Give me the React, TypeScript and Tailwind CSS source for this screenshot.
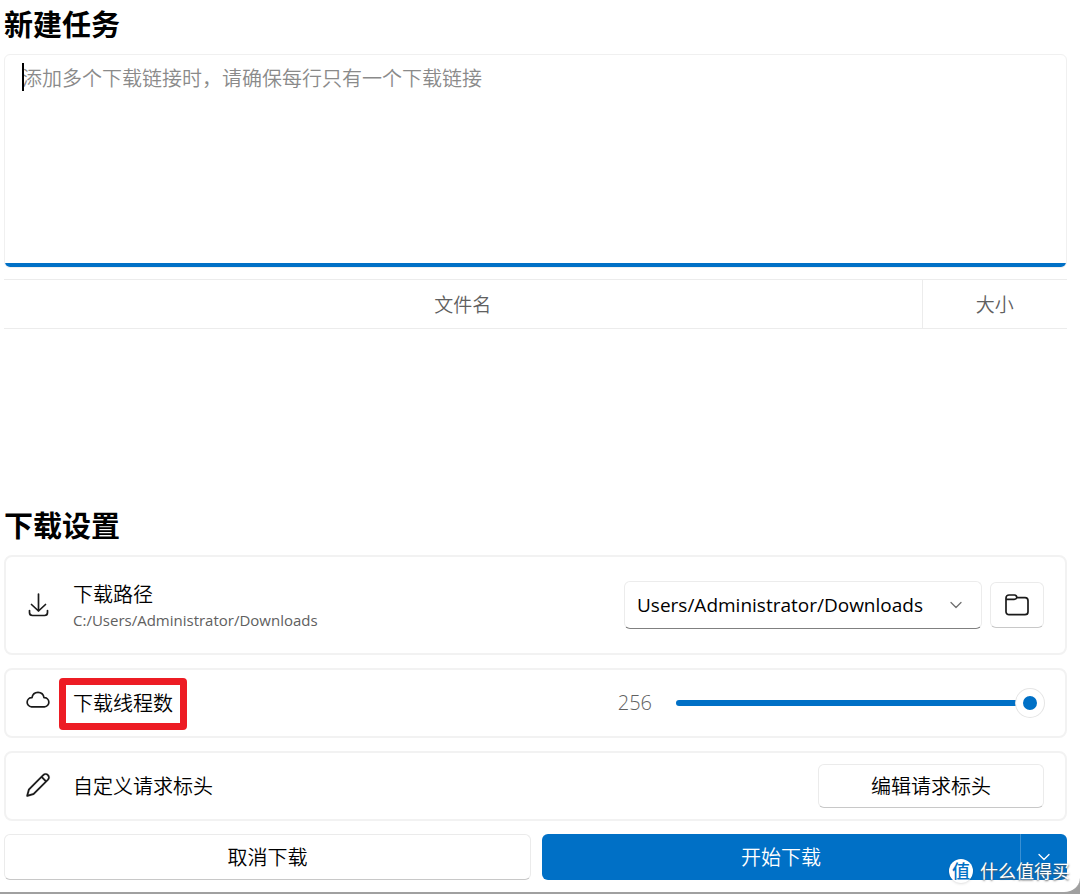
import { useState, type ReactNode } from 'react';

const DOWNLOAD_PATH = 'C:/Users/Administrator/Downloads';
const MAX_THREADS = 256;

const buttonBase =
  'flex items-center justify-center rounded-md border border-[#ebebeb] border-b-[#c8c8c8] bg-white text-xl hover:bg-gray-50';

function DownloadIcon() {
  return (
    <svg viewBox="0 0 24 24" className="size-6" fill="none" stroke="#1a1a1a" strokeWidth="1.7" strokeLinecap="round" strokeLinejoin="round">
      <path d="M12.5 1v17M5.500 11.500l7 6.500 7-6.500M3.500 17.500v2a3 3 0 0 0 3 3h12a3 3 0 0 0 3-3v-2" />
    </svg>
  );
}

function CloudIcon() {
  return (
    <svg viewBox="0 0 24 24" className="mb-1.5 size-6" fill="none" stroke="#1a1a1a" strokeWidth="1.7" strokeLinejoin="round">
      <path d="M5.5 18.8a4.6 4.6 0 0 1 .5-9.2c.5-3.2 2.9-5.3 6-5.3s5.5 2.1 6 5.3a4.6 4.6 0 0 1 .5 9.2z" />
    </svg>
  );
}

function PencilIcon() {
  return (
    <svg viewBox="0 0 24 24" className="mb-0.5 size-7" fill="#1a1a1a" stroke="#1a1a1a" strokeWidth="0.1">
      <path d="M21.03 2.97a3.58 3.58 0 0 1 0 5.06L9.06 20c-.28.28-.62.48-1 .59l-5.12 1.4a.75.75 0 0 1-.92-.93l1.4-5.11c.1-.38.3-.73.58-1.01L15.97 2.97a3.58 3.58 0 0 1 5.06 0ZM15 6.06 5.06 16a.75.75 0 0 0-.19.33l-1.05 3.85 3.85-1.05A.75.75 0 0 0 8 18.94L17.94 9 15 6.06Zm2.03-2.03-.97.97L19 7.94l.97-.97a2.08 2.08 0 1 0-2.94-2.94Z" />
    </svg>
  );
}

function FolderIcon() {
  return (
    <svg viewBox="0 0 24 24" className="size-6" fill="none" stroke="#1a1a1a" strokeWidth="1.7" strokeLinejoin="round">
      <path d="M1 5a3 3 0 0 1 3-3h5.5a2.5 2.5 0 0 1 2.3 2.7H20a3 3 0 0 1 3 3v11a3 3 0 0 1-3 3H4a3 3 0 0 1-3-3zM1.2 6.3h8q2 0 2.6-1.6" />
    </svg>
  );
}

function Chevron({ className }: { className?: string }) {
  return (
    <svg viewBox="0 0 12 12" className={className} fill="none" stroke="currentColor" strokeWidth="1.3" strokeLinecap="round" strokeLinejoin="round">
      <path d="M1 3.5l5 5 5-5" />
    </svg>
  );
}

function SettingCard({ icon, title, children }: { icon: ReactNode; title: ReactNode; children: ReactNode }) {
  return (
    <div className="flex min-h-[70px] items-center rounded-lg border-2 border-[#f2f2f2] pr-[21px] pl-[17px]">
      <div className="flex w-[30px] shrink-0 justify-center">{icon}</div>
      <div className="ml-5 flex-1">{title}</div>
      {children}
    </div>
  );
}

export default function App() {
  const [threads, setThreads] = useState(MAX_THREADS);
  const percent = (threads / MAX_THREADS) * 100;

  return (
    <div className="relative min-h-screen bg-[#a0a0a0] font-['Open_Sans','Noto_Sans_CJK_SC',sans-serif] font-[350] text-black">
      <main className="flex min-h-screen flex-col rounded-br-2xl border-b-2 border-[#a0a0a0] bg-white pr-[13px] pb-3 pl-1">
        <h1 className="pt-1 text-[29px] leading-[42px] font-bold">
          <label htmlFor="links">新建任务</label>
        </h1>

        <div className="relative mt-2 h-[214px] overflow-hidden rounded-md border border-[#f0f0f0]">
          <textarea
            id="links"
            placeholder="添加多个下载链接时，请确保每行只有一个下载链接"
            className="block h-full w-full resize-none px-[17px] py-2.5 text-xl leading-7 outline-none placeholder:text-[#8a8a8a]"
          />
          <span className="absolute top-2 left-[17px] h-7 w-0.5 bg-black" />
          <span className="absolute inset-x-0 bottom-0 h-1 bg-[#0070c6]" />
        </div>

        <div className="mt-[11px] flex-1">
          <table className="w-full table-fixed border-y border-[#ececec] text-[#606060]">
            <thead>
              <tr className="h-[49px] text-[19px]">
                <th className="pt-0.5 font-[350]">文件名</th>
                <th className="w-[145px] border-l border-[#ececec] pt-0.5 font-[350]">大小</th>
              </tr>
            </thead>
          </table>
        </div>

        <h2 className="text-[29px] leading-[42px] font-bold">下载设置</h2>

        <section className="mt-2 flex flex-col gap-[13px]">
          <SettingCard
            icon={<DownloadIcon />}
            title={
              <div className="pt-6 pb-[22px]">
                <label htmlFor="path" className="block text-xl leading-7">下载路径</label>
                <p className="text-[15px] leading-[22px] font-normal text-[#606060]">{DOWNLOAD_PATH}</p>
              </div>
            }
          >
            <div className="relative w-[358px]">
              <select
                id="path"
                className="block h-12 w-full appearance-none rounded-md border border-[#ececec] border-b-[#808080] bg-white pr-10 pl-3 text-[19px] font-normal outline-none"
              >
                <option>Users/Administrator/Downloads</option>
              </select>
              <Chevron className="pointer-events-none absolute top-[18px] right-5 size-3 text-[#707070]" />
            </div>
            <button type="button" aria-label="选择文件夹" className={`${buttonBase} ml-2 h-[46px] w-[54px]`}>
              <FolderIcon />
            </button>
          </SettingCard>

          <SettingCard
            icon={<CloudIcon />}
            title={
              <span className="relative block w-fit pt-0.5">
                <label htmlFor="threads" className="block text-xl leading-7">下载线程数</label>
                <span className="pointer-events-none absolute -inset-x-[14px] -top-2.5 -bottom-3 rounded-sm border-[7px] border-[#ed1c24]" />
              </span>
            }
          >
            <output htmlFor="threads" className="mr-6 text-xl text-[#606060]">{threads}</output>
            <input
              id="threads"
              type="range"
              min={1}
              max={MAX_THREADS}
              value={threads}
              onChange={(e) => setThreads(Number(e.target.value))}
              style={{ backgroundImage: `linear-gradient(to right, #0070c6 ${percent}%, #d0d0d0 ${percent}%)` }}
              className="h-1.5 w-[368px] cursor-pointer appearance-none rounded-full outline-none [&::-webkit-slider-thumb]:size-7 [&::-webkit-slider-thumb]:appearance-none [&::-webkit-slider-thumb]:rounded-full [&::-webkit-slider-thumb]:border-[7px] [&::-webkit-slider-thumb]:border-white [&::-webkit-slider-thumb]:bg-[#0070c6] [&::-webkit-slider-thumb]:shadow-[0_0_0_1px_#e5e5e5]"
            />
          </SettingCard>

          <SettingCard icon={<PencilIcon />} title={<span className="block pt-0.5 text-xl leading-7">自定义请求标头</span>}>
            <button type="button" className={`${buttonBase} h-11 w-[226px] pt-0.5`}>编辑请求标头</button>
          </SettingCard>
        </section>

        <footer className="mt-[13px] flex gap-[11px]">
          <button type="button" className={`${buttonBase} h-[46px] flex-1 pt-0.5`}>取消下载</button>
          <div className="flex h-[46px] flex-1 overflow-hidden rounded-md bg-[#0070c6] text-white">
            <button type="button" className="flex-1 pt-0.5 text-xl">开始下载</button>
            <button type="button" aria-label="更多选项" className="flex w-[47px] items-center justify-center border-l border-[#3a90d3]">
              <Chevron className="size-3" />
            </button>
          </div>
        </footer>
      </main>

      <div className="pointer-events-none absolute right-2.5 bottom-[9px] flex items-center gap-[7px] text-white">
        <span className="flex size-6 items-center justify-center rounded-full bg-white text-lg font-medium text-[#0070c6] shadow">值</span>
        <span className="text-lg leading-7 font-normal text-shadow-[0_1px_2px_#555]">什么值得买</span>
      </div>
    </div>
  );
}
